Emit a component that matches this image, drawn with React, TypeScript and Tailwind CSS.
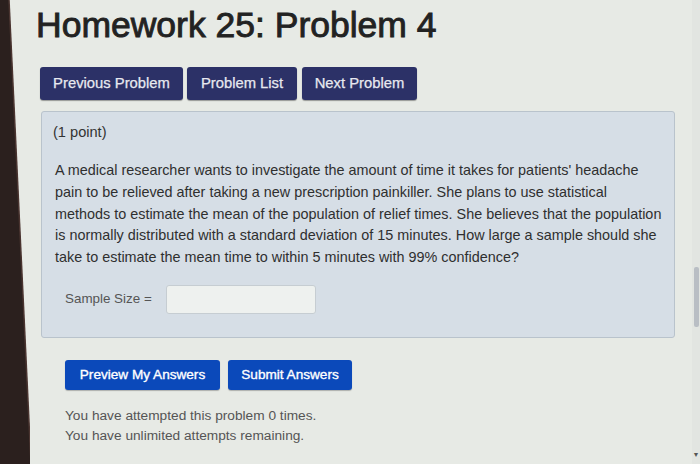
import React from 'react';

const navBtn =
  'h-[33px] flex items-center justify-center rounded-[3px] bg-[#2c3167] text-[#e8e9f0] text-[14.8px] [-webkit-text-stroke:0.25px_#e8e9f0] shadow-[0_1px_1px_rgba(0,0,0,0.35)]';
const submitBtn =
  'h-[30px] flex items-center justify-center rounded-[3px] bg-[#0b49ba] text-white text-[13.6px] [-webkit-text-stroke:0.35px_#ffffff] shadow-[0_1px_1px_rgba(0,0,0,0.25)]';

const App: React.FC = () => {
  return (
    <div
      className="w-[700px] h-[464px] flex overflow-hidden bg-[#e7eae5] text-[#333]"
      style={{ fontFamily: '"Liberation Sans", Arial, sans-serif' }}
    >
      {/* monitor bezel at the left edge of the photo */}
      <svg width="30" height="464" className="shrink-0">
        <rect width="30" height="464" fill="#e7eae5" />
        <polygon points="0,0 9,0 31,464 0,464" fill="#2b201e" />
        <line x1="9" y1="0" x2="31" y2="464" stroke="#4a3430" strokeWidth="1.5" />
      </svg>

      <div className="flex-1 pl-[10px] pt-[5px]">
        <h1 className="ml-[-4px] text-[35.5px] leading-[40px] text-[#222] [-webkit-text-stroke:0.9px_#222]">
          Homework 25: Problem 4
        </h1>

        <div className="mt-[22px] flex gap-[4px]">
          <button type="button" className={`${navBtn} w-[143px]`}>Previous Problem</button>
          <button type="button" className={`${navBtn} w-[110px]`}>Problem List</button>
          <button type="button" className={`${navBtn} w-[115px] ml-[1px]`}>Next Problem</button>
        </div>

        <div className="mt-[11px] ml-[1px] w-[634px] h-[227px] rounded-[3px] border border-[#b9c3cc] bg-[#d6dee6] px-[11px] pt-[10px]">
          <div className="text-[14.6px] leading-[20px] text-[#333]">(1 point)</div>

          <p className="mt-[18px] ml-[2px] text-[14.4px] leading-[21.75px] text-[#2f2f2f] whitespace-nowrap">
            A medical researcher wants to investigate the amount of time it takes for patients' headache
            <br />
            pain to be relieved after taking a new prescription painkiller. She plans to use statistical
            <br />
            methods to estimate the mean of the population of relief times. She believes that the population
            <br />
            is normally distributed with a standard deviation of 15 minutes. How large a sample should she
            <br />
            take to estimate the mean time to within 5 minutes with 99% confidence?
          </p>

          <div className="mt-[16px] ml-[12px] flex items-center gap-[14px]">
            <span className="text-[13.4px] text-[#555]">Sample Size =</span>
            <input
              type="text"
              className="w-[150px] h-[29px] rounded-[3px] border border-[#c6cdd2] bg-[#eef1ef] outline-none"
            />
          </div>
        </div>

        <div className="mt-[22px] ml-[25px] flex gap-[8px]">
          <button type="button" className={`${submitBtn} w-[155px]`}>Preview My Answers</button>
          <button type="button" className={`${submitBtn} w-[124px]`}>Submit Answers</button>
        </div>

        <div className="mt-[16px] ml-[25px] text-[13.7px] leading-[20px] text-[#555]">
          <div>You have attempted this problem 0 times.</div>
          <div>You have unlimited attempts remaining.</div>
        </div>
      </div>

      {/* scrollbar edge */}
      <div className="w-[8px] shrink-0 flex flex-col items-center bg-[#e2e5e1]">
        <div className="mt-[267px] h-[60px] w-[5px] rounded-[2px] bg-[#b9bec4]" />
        <div className="mt-auto mb-[6px] text-[7px] leading-none text-[#555]">▼</div>
      </div>
    </div>
  );
};

export default App;
